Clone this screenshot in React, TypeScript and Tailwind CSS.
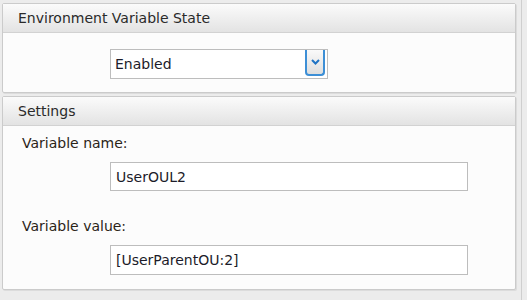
import { useState } from 'react';

function Header({ title }: { title: string }) {
  return (
    <div className="h-[29px] flex items-center pl-[15px] border-b border-[#d2d2d2] bg-gradient-to-b from-[#fbfbfb] to-[#e3e3e3] text-[14px] text-[#2a2a2a]">
      {title}
    </div>
  );
}

export default function App() {
  const [state, setState] = useState('Enabled');
  const [name, setName] = useState('UserOUL2');
  const [value, setValue] = useState('[UserParentOU:2]');

  return (
    <div className="w-[527px] h-[300px] bg-[#ececec] font-['DejaVu_Sans',sans-serif] overflow-hidden">
      <div className="w-[522px] h-[300px] pt-[3px] pl-[2px] pr-[5px] border-r border-[#cfcfcf] flex flex-col gap-[3px]">
        {/* Environment variable state */}
        <div className="border border-[#cbcbcb] rounded-[2px] bg-[#fcfcfc] shadow-[1px_1px_0_#dcdcdc]">
          <Header title="Environment Variable State" />
          <div className="h-[59px] pl-[107px] pt-[16px]">
            <div className="w-[218px] h-[30px] flex items-center border border-[#bdbdbd] bg-white pl-[4px] pr-[2px]">
              <span className="flex-1 text-[14px] text-[#1c1c2a]">{state}</span>
              <button
                onClick={() => setState(state === 'Enabled' ? 'Disabled' : 'Enabled')}
                className="w-[20px] h-[26px] mb-[2px] self-end border-2 border-t-0 border-[#3d8fd6] rounded-b-[4px] bg-gradient-to-b from-[#fafafa] to-[#dedede] flex items-center justify-center"
              >
                <svg width="9" height="6" viewBox="0 0 9 6">
                  <path d="M1 1 L4.5 4.5 L8 1" stroke="#1f73c4" strokeWidth="2" fill="none" />
                </svg>
              </button>
            </div>
          </div>
        </div>

        {/* Settings */}
        <div className="h-[194px] border border-[#cbcbcb] rounded-[2px] bg-[#fcfcfc] shadow-[1px_1px_0_#dcdcdc]">
          <Header title="Settings" />
          <div className="pl-[19px] pt-[7px] text-[14px] text-[#2b2418]">
            <div className="h-[20px] flex items-center">Variable name:</div>
            <div className="pl-[88px] mt-[9px]">
              <input
                value={name}
                onChange={(e) => setName(e.target.value)}
                className="w-[358px] h-[29px] border border-[#bdbdbd] bg-white px-[5px] text-[14px] text-[#1c1c2a] outline-none"
              />
            </div>
            <div className="h-[20px] flex items-center mt-[25px]">Variable value:</div>
            <div className="pl-[88px] mt-[9px]">
              <input
                value={value}
                onChange={(e) => setValue(e.target.value)}
                className="w-[358px] h-[30px] border border-[#bdbdbd] bg-white px-[5px] text-[14px] text-[#1c1c2a] outline-none"
              />
            </div>
          </div>
        </div>
      </div>
    </div>
  );
}
